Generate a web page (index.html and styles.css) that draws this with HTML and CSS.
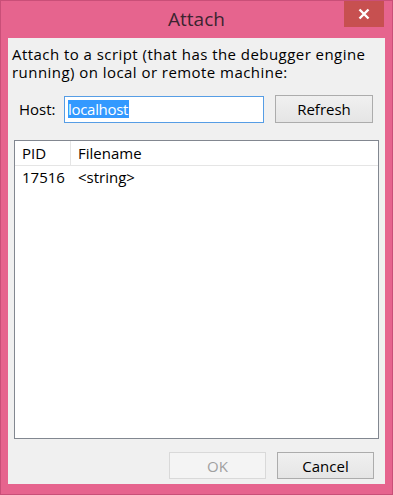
FILE: index.html
```html
<!DOCTYPE html>
<html>
<head>
<meta charset="utf-8">
<link rel="stylesheet" href="styles.css">
</head>
<body>
<div class="window">
  <div class="titlebar">
    <span class="title">Attach</span>
    <div class="close"><svg width="12" height="12" viewBox="0 0 12 12"><path d="M1.5 1.5 L10.5 10.5 M10.5 1.5 L1.5 10.5" stroke="#fff" stroke-width="2.4" fill="none"/></svg></div>
  </div>
  <div class="client">
    <p class="intro"><span class="line">Attach to a script (that has the debugger engine</span><span class="line">running) on local or remote machine:</span></p>
    <div class="host-row">
      <label class="host-label">Host:</label>
      <div class="input"><span class="sel">localhost</span></div>
      <button class="btn refresh">Refresh</button>
    </div>
    <div class="list">
      <div class="list-head">
        <div class="col pid">PID</div>
        <div class="col fname">Filename</div>
      </div>
      <div class="list-row">
        <div class="col pid">17516</div>
        <div class="col fname">&lt;string&gt;</div>
      </div>
    </div>
    <div class="actions">
      <button class="btn disabled">OK</button>
      <button class="btn">Cancel</button>
    </div>
  </div>
</div>
</body>
</html>
```
FILE: styles.css
```css
html, body {
  margin: 0;
  padding: 0;
  background: #e6648e;
}
.window {
  width: 393px;
  height: 495px;
  box-sizing: border-box;
  background: #e6648e;
  border: 1px solid #c94f78;
  position: relative;
  display: flex;
  flex-direction: column;
  font-family: "Open Sans", "Noto Sans", sans-serif;
  font-size: 15px;
  color: #000;
}
.titlebar {
  height: 37px;
  display: flex;
  justify-content: center;
  align-items: flex-start;
}
.title {
  margin-top: 5px;
  font-size: 19px;
  color: #3b2430;
}
.close {
  position: absolute;
  top: 0;
  right: 8px;
  width: 40px;
  height: 26px;
  background: #c75050;
  display: flex;
  align-items: center;
  justify-content: center;
}
.client {
  margin: 0 7px 0 7px;
  height: 446px;
  background: #f0f0f0;
  display: flex;
  flex-direction: column;
}
.intro {
  margin: 7px 0 0 4px;
  display: flex;
  flex-direction: column;
  white-space: nowrap;
  letter-spacing: 0.45px;
}
.intro .line {
  display: block;
  height: 18px;
  line-height: 18px;
}
.host-row {
  display: flex;
  align-items: center;
  margin-top: 14px;
  height: 28px;
}
.host-label {
  margin-left: 11px;
  width: 45px;
}
.input {
  width: 200px;
  height: 27px;
  box-sizing: border-box;
  border: 1px solid #569de5;
  background: #fff;
  display: flex;
  align-items: center;
  padding-left: 3px;
}
.sel {
  background: #3399ff;
  color: #fff;
  line-height: 18px;
  padding-right: 1px;
  letter-spacing: -0.3px;
}
.btn {
  font-family: inherit;
  font-size: 15px;
  width: 98px;
  height: 28px;
  box-sizing: border-box;
  border: 1px solid #acacac;
  background: linear-gradient(#f0f0f0, #e5e5e5);
  color: #000;
  padding: 0;
}
.refresh {
  margin-left: 11px;
}
.btn.disabled {
  color: #a0a0a0;
  border-color: #d9d9d9;
  background: #f4f4f4;
}
.list {
  margin: 17px 0 0 6px;
  width: 365px;
  height: 299px;
  box-sizing: border-box;
  border: 1px solid #828790;
  background: #fff;
}
.list-head, .list-row {
  display: flex;
  height: 24px;
  align-items: center;
}
.list-head {
  border-bottom: 1px solid #e5e5e5;
}
.list-head .pid {
  border-right: 1px solid #e5e5e5;
}
.col.pid {
  width: 56px;
  padding-left: 7px;
  box-sizing: border-box;
  height: 100%;
  display: flex;
  align-items: center;
}
.col.fname {
  padding-left: 7px;
}
.list-row {
  height: 22px;
}
.actions {
  display: flex;
  justify-content: flex-end;
  gap: 11px;
  margin-top: 13px;
  margin-right: 11px;
}
.actions .btn {
  width: 97px;
  height: 27px;
}
```
